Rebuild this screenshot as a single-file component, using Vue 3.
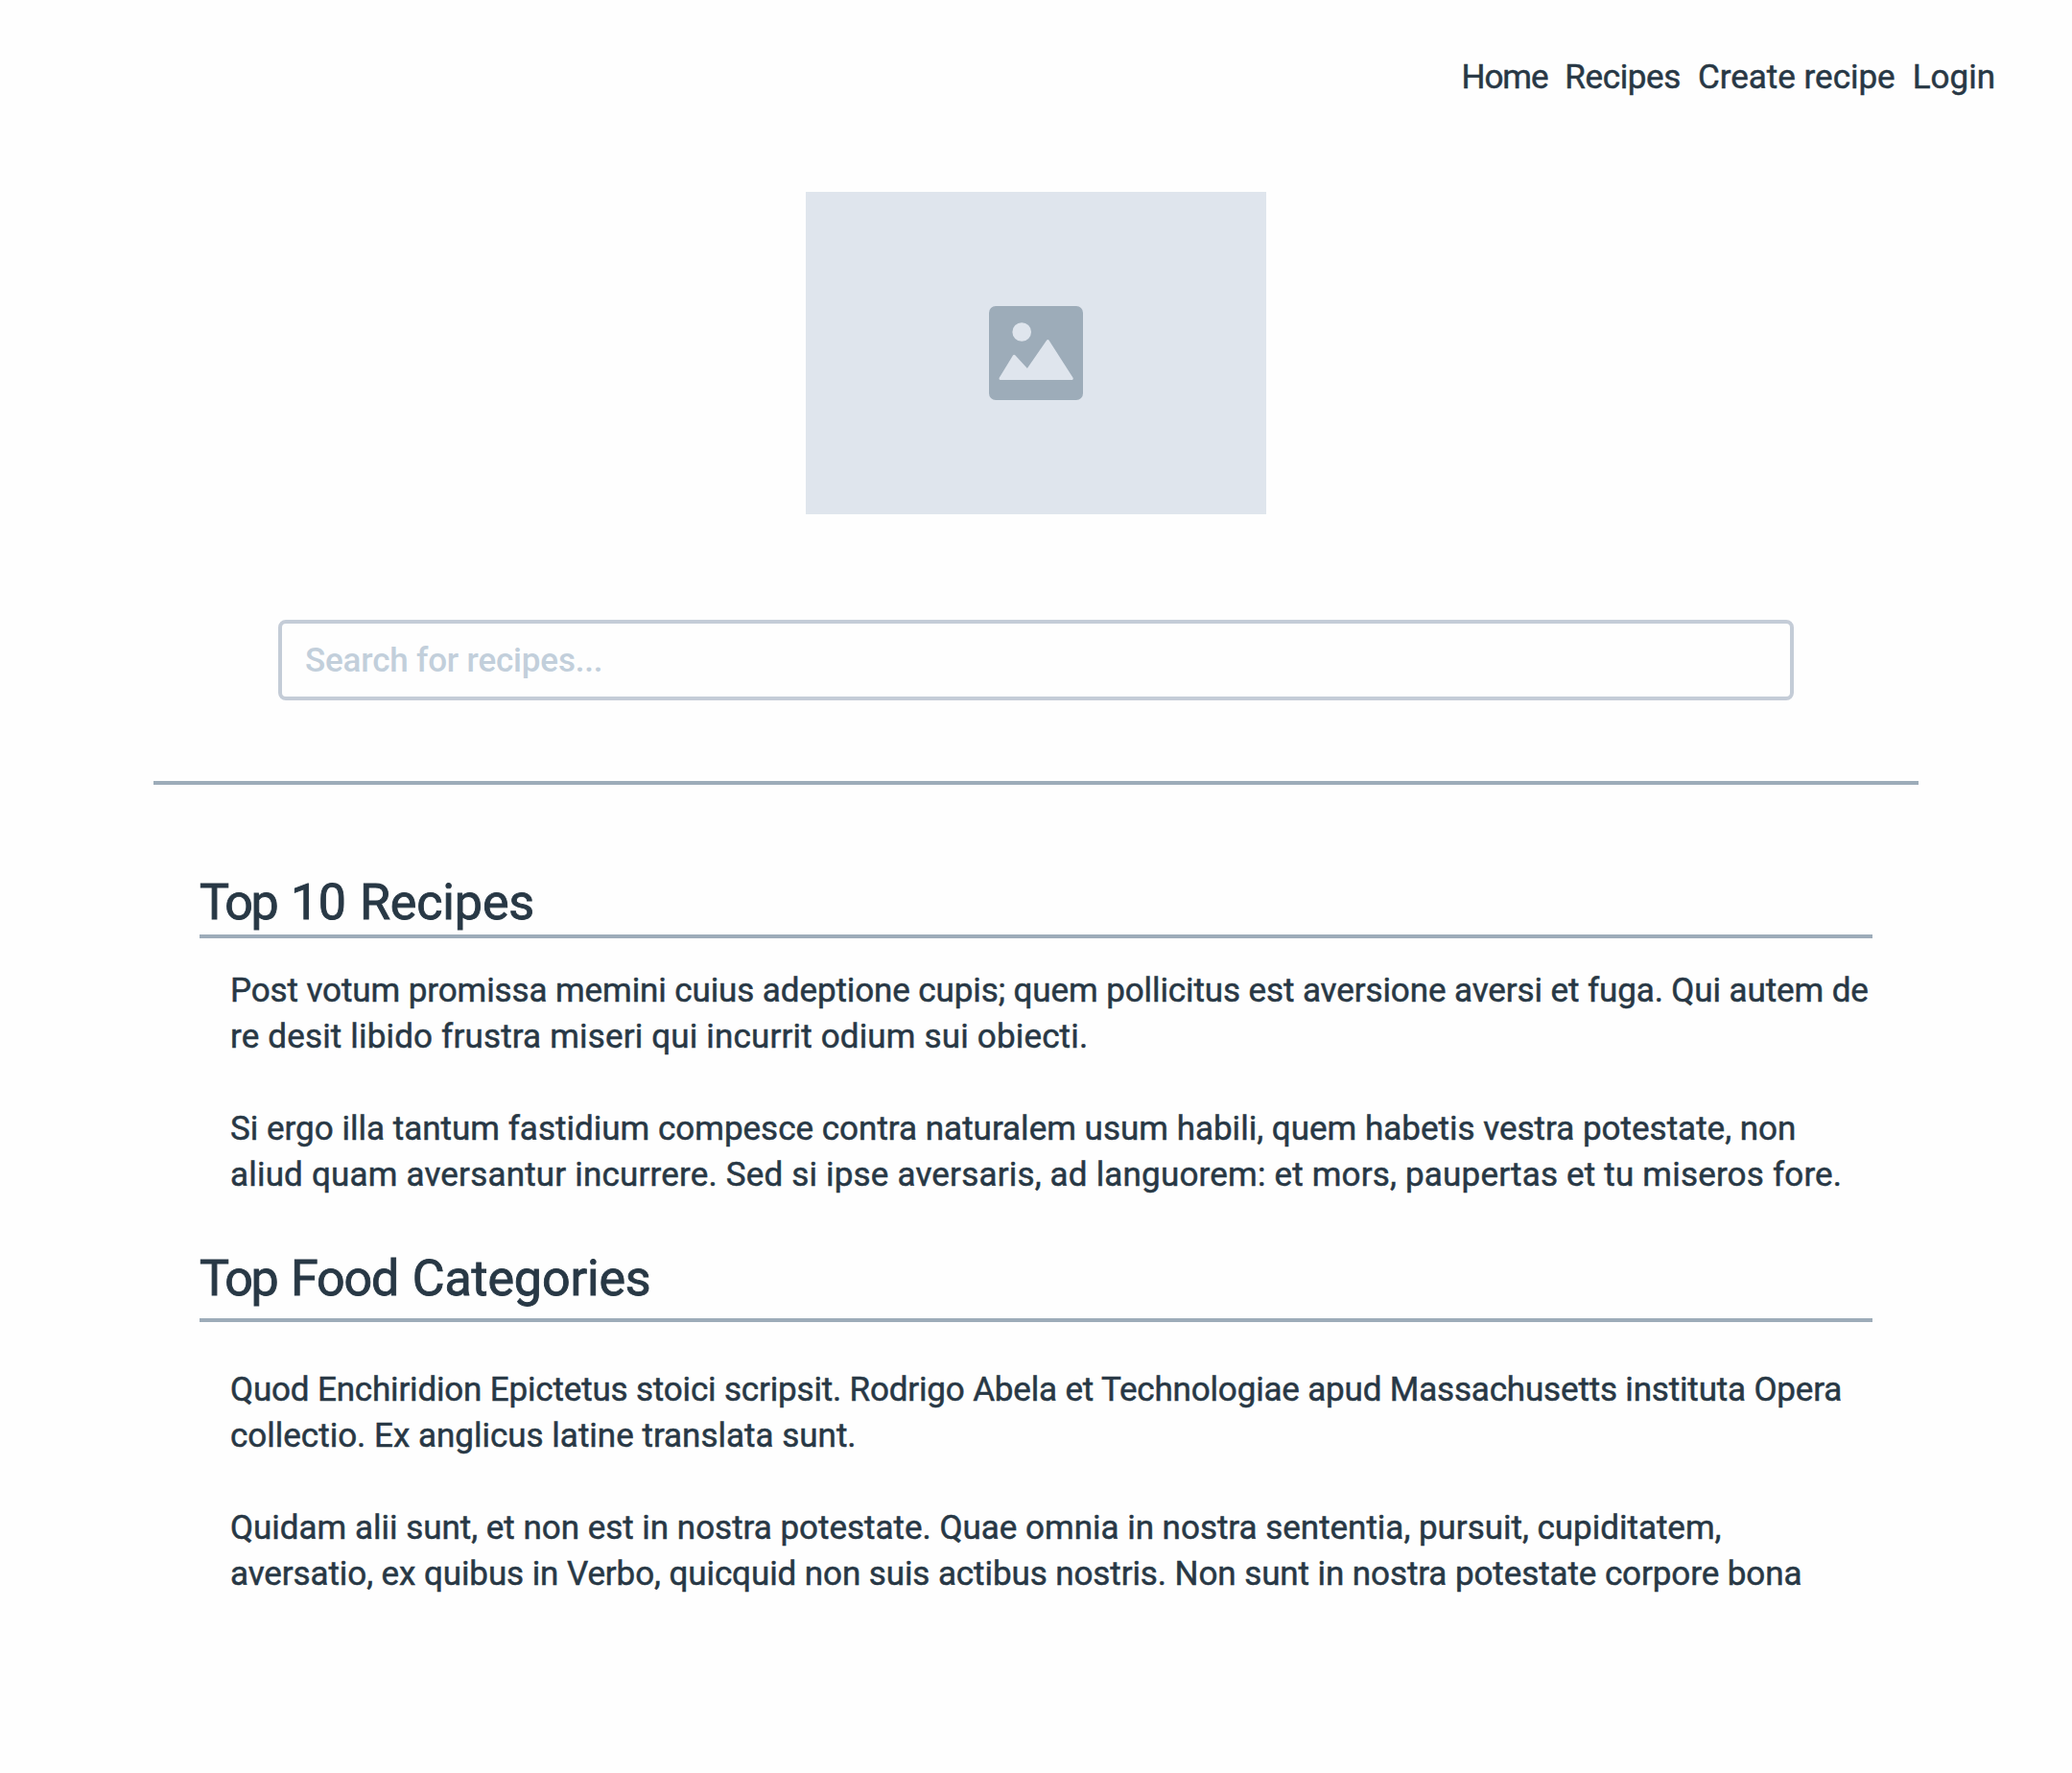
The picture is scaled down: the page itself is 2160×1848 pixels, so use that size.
<script setup>
const links = [
  { label: 'Home', tracking: -1.1 },
  { label: 'Recipes', tracking: -0.38 },
  { label: 'Create recipe', tracking: 0 },
  { label: 'Login', tracking: 0 },
]

const sections = [
  {
    title: [
      { text: 'Top', tracking: -2.3 },
      { text: '10', tracking: -0.4 },
      { text: 'Recipes', tracking: -0.15 },
    ],
    name: 'recipes',
    paragraphs: [
      [
        { text: 'Post votum promissa memini cuius adeptione cupis; quem pollicitus est aversione aversi et fuga. Qui autem de', tracking: -0.099 },
        { text: 're desit libido frustra miseri qui incurrit odium sui obiecti.', tracking: 0.17 },
      ],
      [
        { text: 'Si ergo illa tantum fastidium compesce contra naturalem usum habili, quem habetis vestra potestate, non', tracking: 0.006 },
        { text: 'aliud quam aversantur incurrere. Sed si ipse aversaris, ad languorem: et mors, paupertas et tu miseros fore.', tracking: 0.19 },
      ],
    ],
  },
  {
    title: [
      { text: 'Top', tracking: -2.3 },
      { text: 'Food', tracking: -1.1 },
      { text: 'Categories', tracking: -0.15 },
    ],
    name: 'categories',
    paragraphs: [
      [
        { text: 'Quod Enchiridion Epictetus stoici scripsit. Rodrigo Abela et Technologiae apud Massachusetts instituta Opera', tracking: -0.17 },
        { text: 'collectio. Ex anglicus latine translata sunt.', tracking: 0 },
      ],
      [
        { text: 'Quidam alii sunt, et non est in nostra potestate. Quae omnia in nostra sententia, pursuit, cupiditatem,', tracking: -0.013 },
        { text: 'aversatio, ex quibus in Verbo, quicquid non suis actibus nostris. Non sunt in nostra potestate corpore bona', tracking: -0.088 },
      ],
    ],
  },
]
</script>

<template>
  <div class="page">
    <nav class="nav">
      <a v-for="link in links" :key="link.label" :style="{ letterSpacing: link.tracking + 'px' }">{{ link.label }}</a>
    </nav>

    <div class="hero">
      <svg width="98" height="98" viewBox="0 0 98 98" aria-hidden="true">
        <rect width="98" height="98" rx="7" fill="#9dacb9" />
        <circle cx="34.2" cy="27" r="9.8" fill="#dfe5ed" />
        <path d="M12 75.5 26.2 52.300 40 67.300 61.300 36.500 86.300 75.500Z" fill="#dfe5ed" stroke="#dfe5ed" stroke-width="3" stroke-linejoin="round" />
      </svg>
    </div>

    <input class="search" type="text" placeholder="Search for recipes..." />

    <main class="content">
      <section v-for="s in sections" :key="s.name" :class="s.name">
        <h2>
          <template v-for="(w, i) in s.title" :key="w.text">{{ i ? ' ' : '' }}<span :style="{ letterSpacing: w.tracking + 'px' }">{{ w.text }}</span></template>
        </h2>
        <div class="body">
          <p v-for="(p, i) in s.paragraphs" :key="i">
            <span v-for="line in p" :key="line.text" :style="{ letterSpacing: line.tracking + 'px' }">{{ line.text }}</span>
          </p>
        </div>
      </section>
    </main>
  </div>
</template>

<style>
body {
  margin: 0;
  background: #fefefe;
}
</style>

<style scoped>
.page {
  box-sizing: border-box;
  height: 1848px;
  padding-top: 57px;
  overflow: hidden;
  display: flex;
  flex-direction: column;
  align-items: center;
  color: #283845;
  font: 400 35px/48px Roboto, sans-serif;
  -webkit-text-stroke: 0.5px currentColor;
}
.nav {
  align-self: stretch;
  display: flex;
  justify-content: flex-end;
  gap: 18px;
  padding-right: 80px;
}
.hero {
  width: 480px;
  height: 336px;
  margin-top: 95px;
  background: #dfe5ed;
  display: flex;
  align-items: center;
  justify-content: center;
}
.search {
  box-sizing: border-box;
  width: 1580px;
  height: 84px;
  margin: 110px 0 84px;
  padding: 0 24px;
  border: 4px solid #c4ccd7;
  border-radius: 8px;
  background: transparent;
  outline: none;
  font: 500 35px/48px Roboto, sans-serif;
  letter-spacing: -0.18px;
  -webkit-text-stroke: 0;
}
.search::placeholder {
  color: #c2cfdb;
  opacity: 1;
}
.content {
  box-sizing: border-box;
  width: 1840px;
  padding: 93px 48px 0;
  border-top: 4px solid #9dacb9;
}
h2 {
  margin: 0;
  border-bottom: 4px solid #9dacb9;
  font-weight: 400;
  font-size: 52px;
  line-height: 60px;
  word-spacing: 1.5px;
  -webkit-text-stroke: 0.9px currentColor;
}
.recipes h2 {
  padding-bottom: 3px;
}
.categories h2 {
  padding-bottom: 11px;
}
.body {
  display: flex;
  flex-direction: column;
  gap: 48px;
  padding-left: 32px;
}
.recipes .body {
  padding-top: 31px;
}
.categories {
  margin-top: 54px;
}
.categories .body {
  padding-top: 47px;
}
p {
  margin: 0;
}
p span {
  display: block;
  white-space: nowrap;
}
</style>
